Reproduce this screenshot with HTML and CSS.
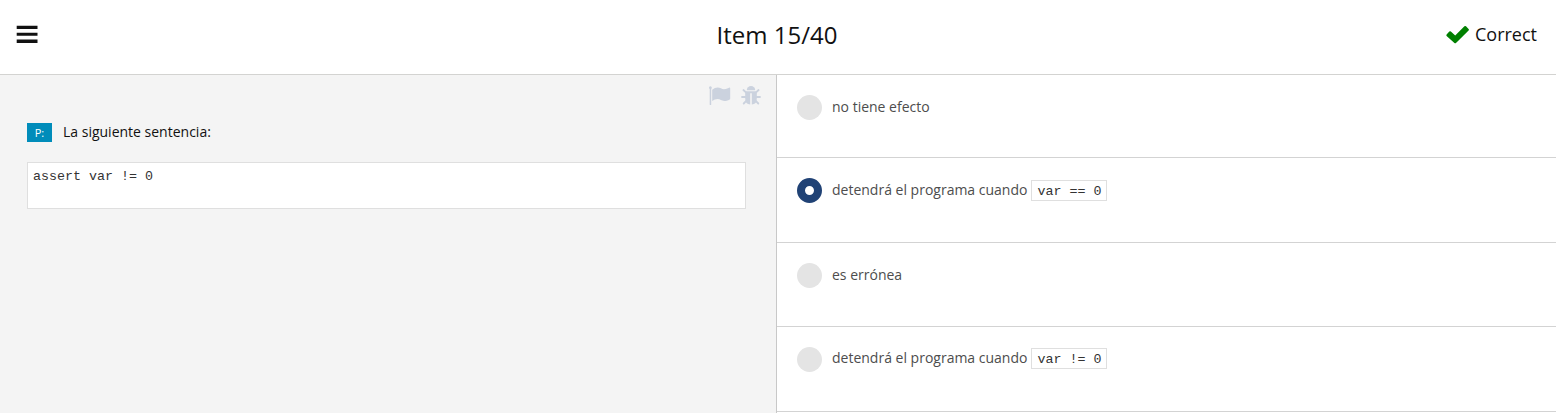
FILE: index.html
```html
<!DOCTYPE html>
<html lang="es">
<head>
<meta charset="utf-8">
<title>Item 15/40</title>
<link rel="stylesheet" href="styles.css">
</head>
<body>
<header class="topbar">
  <button class="menu" aria-label="Menu"><svg width="22" height="18" viewBox="0 0 22 18"><path d="M.7.8h20.8V4H.7zM.7 7.7h20.8v3.1H.7zM.7 14.5h20.8V18H.7z" fill="#111"/></svg></button>
  <h1 class="title">Item 15/40</h1>
  <div class="result"><svg width="24" height="19" viewBox="0 0 24 19"><path d="M.6 9.5 3.3 6.6Q4.1 5.8 4.9 6.6L9.2 10.6 18.4 1.3Q19.2.5 20 1.3L22.6 3.9Q23.4 4.7 22.6 5.5L10 17.9Q9.2 18.7 8.4 17.9L.6 10.9Q0 10.2.6 9.5Z" fill="#008000"/></svg><span>Correct</span></div>
</header>
<main class="content">
  <section class="question">
    <div class="tools">
      <svg width="22" height="20" viewBox="0 0 22 20" fill="#cbd2de"><path d="M0 1.8a1.4 1.4 0 1 1 2.2 1.1V18.5Q2.2 19 1.6 19H1.2Q.7 19 .7 18.5V2.9Q0 2.5 0 1.8ZM3.2 3.7Q5.8 1.6 8.6 1.6C11.2 1.6 12.7 3.3 15 3.3 17.4 3.3 19.3 1.8 20.6 1.5Q21.2 1.5 21.2 2.2V12.8Q21.2 13.2 20.7 13.5C18.7 14.5 17 15 15.2 15 12.5 15 11.2 13.1 8.6 13.1 6.7 13.1 5 14 3.2 15Z"/></svg>
      <svg width="20" height="20" viewBox="0 0 20 20" fill="#cbd2de"><path d="M5.8 4.3A4.2 4.2 0 0 1 14.2 4.3Z"/><path d="M4.2 5.3H15.8V12.5Q15.8 18.4 10.8 18.4V7.2H9.2V18.4Q4.2 18.4 4.2 12.5Z"/><path d="M5.2 6.7 2.4 4M14.8 6.7 17.6 4M4.8 11H1M15.2 11H19M5.5 14.6 2.7 17.5M14.5 14.6 17.3 17.5" fill="none" stroke="#cbd2de" stroke-width="1.8" stroke-linecap="round"/></svg>
    </div>
    <div class="prompt"><span class="badge">P:</span><span>La siguiente sentencia:</span></div>
    <pre class="code-block">assert var != 0</pre>
  </section>
  <section class="answers">
    <div class="answer first"><span class="radio"></span><span class="label">no tiene efecto</span></div>
    <div class="answer"><span class="radio selected"></span><span class="label">detendrá el programa cuando</span><code class="chip">var == 0</code></div>
    <div class="answer short"><span class="radio"></span><span class="label">es errónea</span></div>
    <div class="answer"><span class="radio"></span><span class="label">detendrá el programa cuando</span><code class="chip">var != 0</code></div>
  </section>
</main>
</body>
</html>
```
FILE: styles.css
```css
* { box-sizing: border-box; }
body {
  margin: 0;
  height: 413px;
  overflow: hidden;
  background: #fff;
  color: #111;
  font: 14px/20px "Open Sans", sans-serif;
}
.topbar {
  display: grid;
  grid-template-columns: 1fr auto 1fr;
  height: 75px;
  padding: 0 18px 0 16px;
  border-bottom: 1px solid #d3d3d1;
}
.menu {
  justify-self: start;
  align-self: start;
  margin: 25px 0 0;
  padding: 0;
  border: 0;
  background: none;
}
.menu svg, .tools svg, .result svg { display: block; }
.title {
  margin: 19px 0 0;
  font-size: 24px;
  font-weight: 400;
  line-height: 32px;
}
.result {
  display: flex;
  justify-self: end;
  align-items: center;
  gap: 5px;
  height: 24px;
  margin: 22px 1px 0 0;
  font-size: 18px;
}
.content { display: flex; height: 338px; }
.question {
  width: 777px;
  padding: 11px 30px 0 27px;
  border-right: 1px solid #c8c8c8;
  background: #f4f4f4;
}
.tools {
  display: flex;
  justify-content: flex-end;
  gap: 10px;
  height: 20px;
  margin-right: -15px;
}
.prompt {
  display: flex;
  gap: 11px;
  height: 19px;
  margin-top: 17px;
  line-height: 18px;
}
.badge {
  width: 25px;
  background: #008cba;
  color: #fff;
  font-size: 11px;
  line-height: 20px;
  text-align: center;
}
.code-block, .chip {
  border: 1px solid #dfdfdf;
  background: #fff;
  color: #333;
  font: 13.333px/15px "Liberation Mono", monospace;
}
.code-block {
  width: 719px;
  height: 47px;
  margin: 20px 0 0;
  padding: 6px 5px;
}
.answers { flex: 1; }
.answer {
  display: flex;
  height: 85px;
  padding: 20px 20px 0;
  border-bottom: 1px solid #d3d3d3;
  color: #4d4d4d;
}
.answer.first { height: 83px; }
.answer.short { height: 84px; }
.radio {
  width: 25px;
  height: 25px;
  margin-right: 10px;
  border-radius: 50%;
  background: #e4e4e4;
}
.radio.selected { border: 8.5px solid #204275; background: #fff; }
.label { line-height: 24px; }
.chip {
  height: 21px;
  margin: 2px 0 0 4px;
  padding: 3px 5px;
}
.answer:last-child .label { line-height: 22px; }
.answer:last-child .chip { margin-top: 1px; }
```
